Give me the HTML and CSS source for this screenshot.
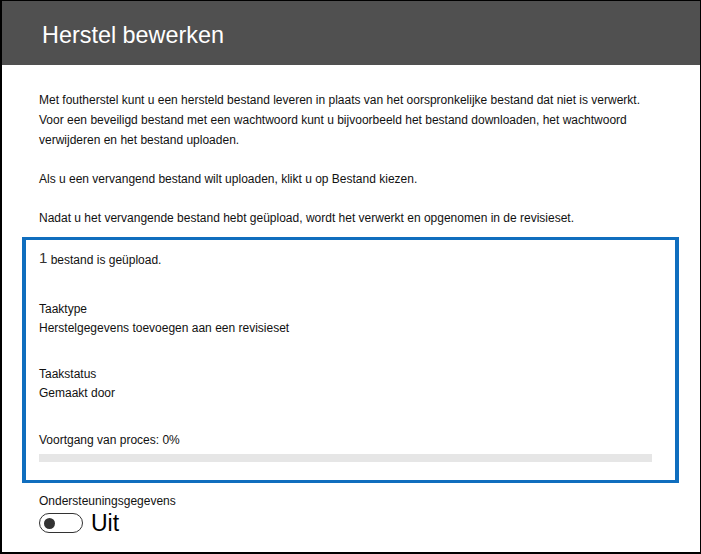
FILE: index.html
```html
<!DOCTYPE html>
<html lang="nl">
<head>
<meta charset="utf-8">
<title>Herstel bewerken</title>
<link rel="stylesheet" href="styles.css">
</head>
<body>
<div class="panel">
  <header class="header">
    <h1 class="title">Herstel bewerken</h1>
  </header>
  <main class="content">
    <div class="intro">
      <p class="para">Met foutherstel kunt u een hersteld bestand leveren in plaats van het oorspronkelijke bestand dat niet is verwerkt.<br>Voor een beveiligd bestand met een wachtwoord kunt u bijvoorbeeld het bestand downloaden, het wachtwoord<br>verwijderen en het bestand uploaden.</p>
      <p class="para">Als u een vervangend bestand wilt uploaden, klikt u op Bestand kiezen.</p>
      <p class="para">Nadat u het vervangende bestand hebt geüpload, wordt het verwerkt en opgenomen in de revisieset.</p>
    </div>
    <section class="status-box">
      <p class="count"><span class="num">1</span> bestand is geüpload.</p>
      <div class="field field-type">
        <div class="label">Taaktype</div>
        <div class="value">Herstelgegevens toevoegen aan een revisieset</div>
      </div>
      <div class="field field-status">
        <div class="label">Taakstatus</div>
        <div class="value">Gemaakt door</div>
      </div>
      <div class="progress-label">Voortgang van proces: 0%</div>
      <div class="progress"><div class="progress-fill" style="width:0%"></div></div>
    </section>
    <div class="support">
      <div class="support-label">Ondersteuningsgegevens</div>
      <div class="toggle-row">
        <span class="toggle"><span class="knob"></span></span>
        <span class="toggle-text">Uit</span>
      </div>
    </div>
  </main>
</div>
</body>
</html>
```
FILE: styles.css
```css
* { box-sizing: border-box; }
html, body { margin: 0; padding: 0; background: #fff; }
body {
  font-family: "Liberation Sans", Arial, sans-serif;
  color: #111;
}
.panel {
  width: 701px;
  height: 554px;
  border-top: 1px solid #000;
  border-left: 2px solid #000;
  border-right: 1px solid #000;
  border-bottom: 2px solid #000;
  display: flex;
  flex-direction: column;
}
.header {
  background: #505050;
  height: 64px;
  flex: none;
  padding-left: 40px;
  display: flex;
  align-items: center;
}
.title {
  margin: 0;
  color: #fff;
  font-weight: normal;
  font-size: 23.4px;
  line-height: 1;
  padding-top: 6px;
}
.content {
  padding: 0 0 0 20px;
  flex: 1;
}
.intro { padding: 25px 0 0 17px; }
.para {
  margin: 0 0 19px;
  font-size: 12px;
  line-height: 20px;
  letter-spacing: 0;
}
.para:last-child { margin-bottom: 0; }
.status-box {
  margin-top: 9px;
  width: 657px;
  height: 246px;
  border: 4px solid #106ebe;
  border-top-width: 3px;
  border-bottom-width: 3px;
  padding: 10px 0 0 13px;
  font-size: 12px;
}
.count { margin: 0; line-height: 18px; }
.num { font-size: 15px; color: #333; position: relative; top: -1px; }
.field-type { margin-top: 31px; }
.field-status { margin-top: 27px; }
.label, .value { line-height: 19px; }
.progress-label { margin-top: 27px; line-height: 20px; }
.progress {
  margin-top: 4px;
  width: 613px;
  height: 8px;
  background: #e6e6e6;
}
.progress-fill { height: 100%; background: #106ebe; }
.support { padding: 8px 0 0 17px; }
.support-label { font-size: 12px; line-height: 20px; }
.toggle-row { display: flex; align-items: center; gap: 8px; }
.toggle {
  width: 44px;
  height: 20px;
  border: 1px solid #333;
  border-radius: 10px;
  display: flex;
  align-items: center;
  padding-left: 4px;
}
.knob {
  width: 11px;
  height: 11px;
  border-radius: 50%;
  background: #333;
}
.toggle-text { font-size: 23px; line-height: 24px; color: #000; }
```
